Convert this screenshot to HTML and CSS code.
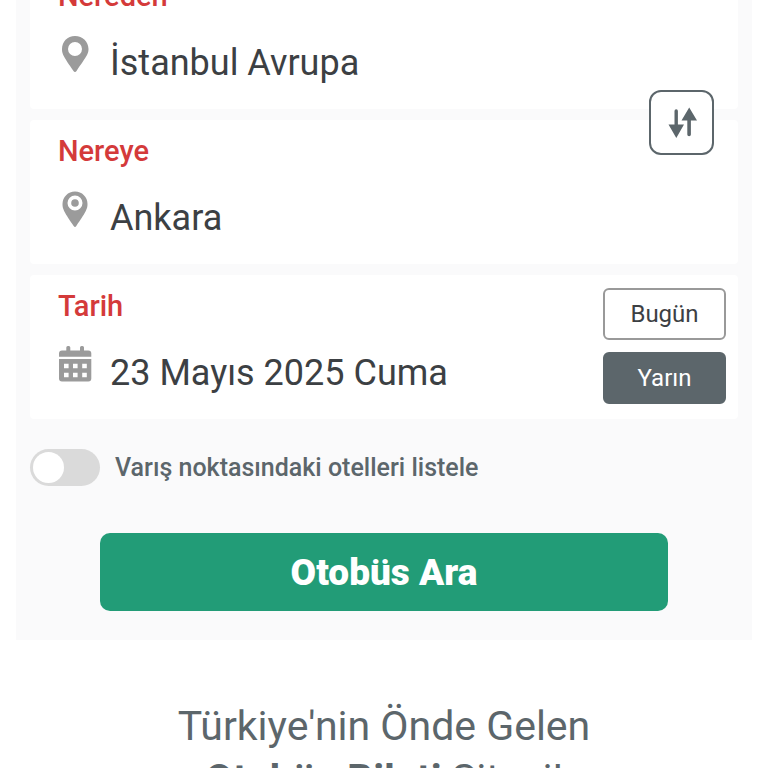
FILE: index.html
```html
<!DOCTYPE html>
<html lang="tr">
<head>
    <meta charset="UTF-8">
    <meta name="viewport" content="width=device-width, initial-scale=1.0">
    <title>Otobüs Bileti</title>
    <link rel="stylesheet" href="styles.css">
</head>
<body>
    <form class="search-box">
        <div class="field">
            <label class="field-label" for="from">Nereden</label>
            <div class="field-row">
                <svg class="field-icon" viewBox="0 0 34 36" aria-hidden="true">
                    <path fill-rule="evenodd" d="M17 0C9.300 0 4 5.900 4 13c0 5.500 2.200 8.200 11.300 21.700q1.700 2.400 3.400 0C27.800 21.200 30.500 18.500 30.500 13 30.500 5.900 24.700 0 17 0zM17 6a7 7 0 1 1 0 14 7 7 0 0 1 0-14z"/>
                </svg>
                <input class="field-input" id="from" type="text" value="İstanbul Avrupa">
            </div>
            <button class="swap-btn" type="button" aria-label="Değiştir">
                <svg viewBox="0 0 30 32" aria-hidden="true">
                    <path d="M7.500 4a1.700 1.700 0 0 1 3.400 0v13.500H17L9.300 31 1.500 17.500h6zM20.300 27.500a1.800 1.800 0 0 0 3.600 0V13.500H30L22.200 0.500 14.500 13.500h5.800z"/>
                </svg>
            </button>
        </div>

        <div class="field">
            <label class="field-label" for="to">Nereye</label>
            <div class="field-row">
                <svg class="field-icon" viewBox="0 0 34 36" aria-hidden="true">
                    <path fill-rule="evenodd" d="M17 0.500C10 0.500 4.500 6 4.500 13c0 5.500 2.200 8.700 11.200 22q1.300 2 2.600 0C27.300 21.700 29.500 18.500 29.500 13 29.500 6 24 0.500 17 0.500zM17 4.500a7.500 7.500 0 1 1 0 15 7.500 7.500 0 0 1 0-15z"/>
                    <circle cx="17" cy="12" r="3.800"/>
                </svg>
                <input class="field-input" id="to" type="text" value="Ankara">
            </div>
        </div>

        <div class="field field-date">
            <div class="field-main">
                <label class="field-label" for="date">Tarih</label>
                <div class="field-row">
                    <svg class="field-icon" viewBox="0 0 34 36" aria-hidden="true">
                        <path d="M1 10.800V7.500q0-3 3-3h4.300V1.500Q8.300 0 9.800 0h1q1.500 0 1.500 1.500v3H22v-3Q22 0 23.500 0h1Q26 0 26 1.500v3h4.300q3 0 3 3v3.300z"/>
                        <path fill-rule="evenodd" d="M1 13h32.300v19.500q0 3-3 3H4q-3 0-3-3zM6 17.700v4.600h4.600v-4.600zm9 0v4.600h4.600v-4.600zm9.200 0v4.600h4.600v-4.600zM6 26.700v4.600h4.600v-4.600zm9 0v4.600h4.600v-4.600zm9.200 0v4.600h4.600v-4.600z"/>
                    </svg>
                    <input class="field-input" id="date" type="text" value="23 Mayıs 2025 Cuma">
                </div>
            </div>
            <div class="day-buttons">
                <button class="day-btn" type="button">Bugün</button>
                <button class="day-btn active" type="button">Yarın</button>
            </div>
        </div>

        <label class="hotel-option">
            <input class="switch" type="checkbox">
            <span>Varış noktasındaki otelleri listele</span>
        </label>

        <button class="search-btn" type="submit">Otobüs Ara</button>
    </form>

    <h1 class="title">Türkiye'nin Önde Gelen<br><b>Otobüs Bileti</b> Sitesi!</h1>
</body>
</html>
```

FILE: styles.css
```css
* {
    box-sizing: border-box;
}
html {
    height: 100%;
    overflow: hidden;
}
body {
    margin: 0;
    height: 100%;
    overflow: hidden;
    background-color: #fff;
    font-family: Roboto, sans-serif;
    color: #3c4043;
}
button, input {
    font-family: inherit;
    color: inherit;
}
button {
    cursor: pointer;
}
.search-box {
    display: flex;
    flex-direction: column;
    gap: 11px;
    margin: -50px 16px 0;
    padding: 15px 14px 29px;
    background-color: #fafafb;
}
.field {
    position: relative;
    height: 144px;
    padding: 13px 12px 0 28px;
    background-color: #fff;
    border-radius: 4px;
}
.field-label {
    display: block;
    font-size: 29px;
    font-weight: 500;
    line-height: 36px;
    color: #d43a3a;
}
.field-row {
    display: flex;
    align-items: flex-start;
    gap: 18px;
    margin-top: 22px;
}
.field-icon {
    flex: none;
    width: 34px;
    height: 36px;
    fill: #9b9b9b;
}
.field-input {
    flex: 1;
    min-width: 0;
    height: 54px;
    padding: 0;
    border: none;
    outline: none;
    background: none;
    font-size: 36px;
}
.swap-btn {
    position: absolute;
    right: 24px;
    bottom: -46px;
    z-index: 1;
    display: flex;
    align-items: center;
    justify-content: center;
    width: 65px;
    height: 65px;
    padding: 0;
    background-color: #fff;
    border: 2px solid #5c666b;
    border-radius: 12px;
}
.swap-btn svg {
    width: 30px;
    height: 32px;
    fill: #5c666b;
}
.field-date {
    display: flex;
}
.field-main {
    flex: 1;
}
.day-buttons {
    display: flex;
    flex-direction: column;
    gap: 12px;
}
.day-btn {
    width: 123px;
    height: 52px;
    padding: 0;
    background-color: #fff;
    border: 2px solid #999;
    border-radius: 6px;
    font-size: 24px;
}
.day-btn.active {
    background-color: #5c666b;
    border-color: #5c666b;
    color: #fff;
}
.hotel-option {
    display: flex;
    align-items: center;
    gap: 15px;
    margin-top: 19px;
    font-size: 25px;
    font-weight: 500;
    color: #5c666b;
}
.switch {
    appearance: none;
    display: flex;
    align-items: center;
    width: 70px;
    height: 37px;
    margin: 0;
    padding: 3px;
    background-color: #dadada;
    border-radius: 19px;
}
.switch::before {
    content: "";
    width: 31px;
    height: 31px;
    background-color: #fff;
    border-radius: 50%;
}
.switch:checked {
    background-color: #229c77;
    justify-content: flex-end;
}
.search-btn {
    height: 78px;
    margin: 36px 70px 0;
    background-color: #229c77;
    border: none;
    border-radius: 10px;
    font-size: 37px;
    font-weight: 900;
    color: #fff;
}
.title {
    margin: 60px 0 0;
    text-align: center;
    font-size: 41px;
    font-weight: 400;
    line-height: 53px;
    color: #5c666b;
}
```
